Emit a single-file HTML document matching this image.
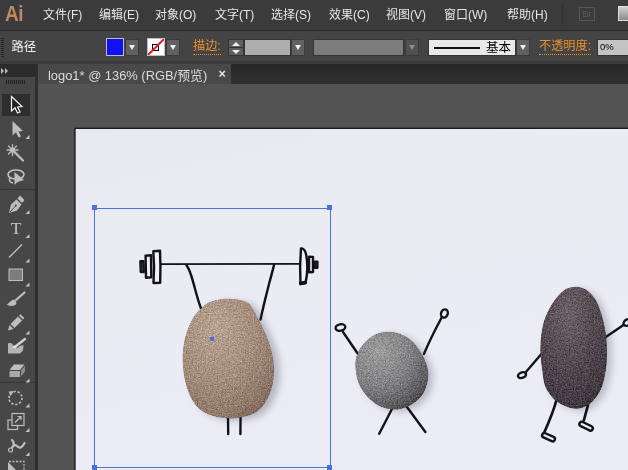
<!DOCTYPE html>
<html><head><meta charset="utf-8">
<style>
html,body{margin:0;padding:0;}
body{width:628px;height:470px;overflow:hidden;background:#535353;position:relative;font-family:"Liberation Sans","Noto Sans CJK SC",sans-serif;}
.abs,.abs *{position:absolute;}
body>*{will-change:transform;}
#menubar{left:0;top:0;width:628px;height:30px;background:#3b3b3b;}
#menubar span{top:6px;font-size:12px;color:#e6e6e6;white-space:nowrap;line-height:18px;}
#ctrl{left:0;top:30px;width:628px;height:31px;background:#444444;border-top:1px solid #2a2a2a;box-sizing:border-box;}
#ctrl .btn{top:8px;height:17px;width:14px;background:#606060;box-sizing:border-box;border:1px solid #3a3a3a;}
#ctrl .btn:after{content:"";position:absolute;left:2.5px;top:5px;border:3.5px solid transparent;border-top:5px solid #f0f0f0;border-bottom:none;}
#ctrl .dis:after{border-top-color:#8c8c8c;}
#ctrl .lbl{color:#e8912d;font-size:12.2px;line-height:15px;top:8px;white-space:nowrap;border-bottom:1px dotted #e8912d;}
#tabstrip{left:0;top:61px;width:628px;height:23px;background:linear-gradient(#272727,#303030);border-top:3px solid #3b3b3b;box-sizing:border-box;}
#tab{left:38px;top:64px;width:193px;height:20px;background:#494949;color:#dcdcdc;font-size:13px;line-height:21px;white-space:nowrap;}
#tools{left:0;top:64px;width:35px;height:406px;background:#474747;}
#toolsep{left:35px;top:64px;width:3px;height:406px;background:#2e2e2e;}
#canvas{left:38px;top:84px;width:590px;height:386px;background:#535353;}
#art{left:74px;top:127px;width:554px;height:343px;}
</style></head><body>
<div id="menubar" class="abs">
<span style="left:5px;top:2px;font-size:22px;font-weight:bold;color:#c08a62;line-height:24px;letter-spacing:-0.5px;transform:scaleX(0.86);transform-origin:0 0;">Ai</span>
<span style="left:43px">文件(F)</span>
<span style="left:99px">编辑(E)</span>
<span style="left:155px">对象(O)</span>
<span style="left:215px">文字(T)</span>
<span style="left:271px">选择(S)</span>
<span style="left:329px">效果(C)</span>
<span style="left:386px">视图(V)</span>
<span style="left:444px">窗口(W)</span>
<span style="left:507px">帮助(H)</span>
<div style="left:562px;top:4px;width:1px;height:22px;background:#303030;"></div>
<div style="left:579px;top:7px;width:16px;height:14px;border:1px solid #585858;box-sizing:border-box;color:#5a5a5a;font-size:9px;line-height:12px;text-align:center;"><span style="position:static;font-size:9px;color:#5c5c5c;line-height:12px;">Br</span></div>
<div style="left:618px;top:6px;width:14px;height:15px;border:1px solid #e0e0e0;box-sizing:border-box;background:linear-gradient(#d0d0d0,#8a8a8a);"></div>
</div>
<div id="ctrl" class="abs">
<div style="left:1px;top:7px;width:3px;height:20px;background:repeating-linear-gradient(#262626 0 1px,#444444 1px 2px);"></div>
<div style="left:11.500px;top:7px;color:#f0f0f0;font-size:12.300px;line-height:18px;white-space:nowrap;">路径</div>
<div style="left:106px;top:7px;width:18px;height:18px;box-sizing:border-box;border:1px solid #bebebe;background:#1010f5;"></div>
<div class="btn" style="left:125px;"></div>
<div style="left:146.500px;top:7px;width:18px;height:18px;box-sizing:border-box;border:1px solid #bebebe;background:#fff;overflow:hidden;">
 <div style="left:4.5px;top:4.5px;width:7px;height:7px;border:1px solid #000;box-sizing:border-box;"></div>
 <div style="left:-4px;top:7px;width:24px;height:2px;background:#e8192c;transform:rotate(-45deg);"></div>
</div>
<div class="btn" style="left:166px;"></div>
<div class="lbl" style="left:193px;">描边:</div>
<div style="left:228px;top:8px;width:16px;height:17px;background:#5e5e5e;border:1px solid #333;box-sizing:border-box;">
 <div style="left:0;top:7px;width:14px;height:1px;background:#333;"></div>
 <div style="left:3px;top:2px;border:4px solid transparent;border-bottom:4px solid #eee;border-top:none;"></div>
 <div style="left:3px;top:10px;border:4px solid transparent;border-top:4px solid #eee;border-bottom:none;"></div>
</div>
<div style="left:244px;top:8px;width:47px;height:17px;background:#adadad;border:1px solid #333;box-sizing:border-box;"></div>
<div class="btn" style="left:291px;"></div>
<div style="left:313px;top:8px;width:91px;height:17px;background:#7c7c7c;border:1px solid #333;box-sizing:border-box;"></div>
<div class="btn dis" style="left:405px;background:#505050;"></div>
<div style="left:428px;top:8px;width:88px;height:17px;background:#e9e9e9;border:1px solid #333;box-sizing:border-box;">
 <div style="left:5px;top:7px;width:46px;height:2px;background:#111;"></div>
 <div style="left:57px;top:-1px;font-size:12.5px;line-height:18px;color:#000;white-space:nowrap;">基本</div>
</div>
<div class="btn" style="left:516px;"></div>
<div class="lbl" style="left:539px;">不透明度:</div>
<div style="left:597px;top:8px;width:40px;height:17px;background:#c4c4c4;border:1px solid #333;box-sizing:border-box;">
 <div style="left:2px;top:0px;font-size:9.5px;line-height:13px;color:#000;">0%</div>
</div>
</div>
<div id="tabstrip" class="abs"></div>
<div id="tab" class="abs"><div style="left:10px;top:1px;font-size:12.9px;">logo1* @ 136% (RGB/预览)</div><div style="left:180.500px;top:0px;font-size:12.500px;font-weight:bold;color:#e4e4e4;">×</div></div>
<div id="canvas" class="abs"></div>
<div id="tools" class="abs">
 <div style="left:0;top:0;width:35px;height:13px;background:#2c2c2c;"></div>
 <div style="left:1px;top:3.5px;border:3.5px solid transparent;border-left:3.5px solid #bcbcbc;border-right:none;"></div>
 <div style="left:4.5px;top:3.5px;border:3.5px solid transparent;border-left:3.5px solid #bcbcbc;border-right:none;"></div>
 <div style="left:6px;top:16px;width:20px;height:4px;background:repeating-linear-gradient(90deg,#222 0 1px,#474747 1px 2px);"></div>
 <div style="left:2px;top:30px;width:28px;height:22px;background:#2e2e2e;"></div>
 <div style="left:0;top:125px;width:35px;height:1px;background:#363636;"></div>
 <div style="left:0;top:318px;width:35px;height:1px;background:#363636;"></div>
</div>
<svg class="abs" style="left:0;top:64px;" width="35" height="406" viewBox="0 64 35 406">
<g fill="#c4c4c4">
 <!-- small corner triangles -->
 <path d="M29.500 135v4h-4zM29.500 210v4h-4zM29.500 234v4h-4zM29.500 258.500v4h-4zM29.500 282.500v4h-4zM29.500 330.500v4h-4zM29.500 378.500v4h-4zM29.500 403.500v4h-4zM29.500 428v4h-4zM29.500 452v4h-4z"/>
</g>
<!-- selection tool -->
<path d="M11.500 96.500 L11.500 111 L15 107.800 L17.500 113 L20 112 L17.600 107 L22 106.500 Z" fill="#222" stroke="#f0f0f0" stroke-width="1.200" stroke-linejoin="miter"/>
<!-- direct selection -->
<path d="M12.500 121 L12.500 135.500 L16 132.300 L18.500 137.500 L21 136.500 L18.600 131.500 L23 131 Z" fill="#bdbdbd"/>
<!-- magic wand -->
<g stroke="#bebebe" stroke-width="1.300" fill="none" stroke-linecap="round">
 <path d="M12.500 144.500v11M7 150h11M8.500 146l8 8M16.500 146l-8 8"/><circle cx="12.500" cy="150" r="2.600" fill="#bebebe" stroke="none"/>
 <path d="M14 151.500L23 160.500" stroke-width="2.200"/>
</g>
<!-- lasso -->
<g stroke="#bebebe" stroke-width="1.600" fill="none">
 <ellipse cx="16" cy="174.500" rx="8" ry="4.500"/>
 <path d="M10 178c-1.500 2 0 4.500 3 5"/>
</g>
<path d="M14.500 172 L14.500 185 L17.500 182 L24 180 Z" fill="#bebebe"/>
<!-- pen -->
<g fill="#bebebe">
 <path d="M9 213 L11 204.500 L16.500 199.500 L21.500 204.500 L17 210.500 Z"/>
 <path d="M17.500 198.500 L20 195.500 L24.500 200 L22 203 Z"/>
</g>
<path d="M10 212 L15.500 206" stroke="#474747" stroke-width="1"/>
<circle cx="15.800" cy="205.500" r="1.100" fill="#474747"/>
<!-- T -->
<text x="16" y="233.500" text-anchor="middle" font-family="Liberation Serif,serif" font-size="17.500" fill="#c4c4c4">T</text>
<!-- line -->
<path d="M9 257.500L22 244.500" stroke="#bebebe" stroke-width="1.500"/>
<!-- rect -->
<rect x="9" y="269" width="13.500" height="11.500" fill="#7d7d7d" stroke="#c0c0c0" stroke-width="1"/>
<!-- brush -->
<path d="M24.500 292.500 L16 300" stroke="#bebebe" stroke-width="2.200" stroke-linecap="round"/>
<path d="M6.500 304.500 C9 303.500 10.500 300.500 13.500 299.500 C15.500 300 16.500 302 16.500 304 C14 306.500 9.500 306.500 6.500 304.500Z" fill="#bebebe"/>
<!-- pencil -->
<g fill="#bebebe">
 <path d="M8 330.500 L9.500 325 L13.500 329 Z"/>
 <path d="M10.500 324 L18 316.500 L22 320.500 L14.500 328 Z"/>
 <path d="M19 315.500 L20.500 314.200 L24.300 318 L23 319.500 Z"/>
</g>
<!-- blob brush -->
<g>
 <path d="M8 343.500 C10 342.500 12 343 13 345 C14 348.500 18 349 19.500 346 L23.500 345 L23 350.500 L20 353.500 L8 353.500 Z" fill="#b4b4b4"/>
 <path d="M15.500 346.500 L25 339" stroke="#d0d0d0" stroke-width="2.400" stroke-linecap="round"/>
 <path d="M12.500 347.500 C13.500 345 15.500 344.500 17 346 C16.500 348.500 14.500 349 12.500 347.500Z" fill="#e0e0e0"/>
</g>
<!-- eraser -->
<g fill="#bebebe">
 <path d="M14 364.500 L24.500 364.500 L20 370 L9.500 370 Z"/>
 <path d="M9.500 371 L20 371 L20 377 L9.500 377 Z" fill="#a8a8a8"/>
 <path d="M21 370.500 L25 365.500 L25 371.500 L21 376.500 Z" fill="#8d8d8d"/>
</g>
<!-- rotate -->
<circle cx="15.500" cy="398" r="6.500" fill="none" stroke="#bebebe" stroke-width="1.600" stroke-dasharray="2.200 1.800"/>
<path d="M8.500 391.500 L14 391 L10.500 396 Z" fill="#bebebe"/>
<!-- scale -->
<g fill="none" stroke="#bebebe" stroke-width="1.200">
 <rect x="8" y="420" width="9.500" height="9.500"/>
 <rect x="12" y="413.500" width="12" height="12" fill="#474747"/>
 <path d="M15 422.500 L21 416.500 M17.500 416.500 H21 V420"/>
</g>
<!-- warp -->
<g fill="none" stroke="#bebebe" stroke-width="2.200" stroke-linecap="round">
 <path d="M10.500 450 C13 445 15 444 17.500 446.500 C20 449 22.500 447 24.500 443"/>
 <path d="M12 440 C13.500 441.500 14 443.500 13.500 445"/>
</g>
<circle cx="10.500" cy="450" r="2" fill="#474747" stroke="#bebebe" stroke-width="1.200"/>
<!-- free transform -->
<path d="M8 462 L16 470 L8 470 Z" fill="#bebebe"/>
<path d="M9 461.500 H24 V470" fill="none" stroke="#bebebe" stroke-width="1.300" stroke-dasharray="2 1.500"/>
</svg>
<div id="toolsep" class="abs"></div>
<svg id="art" class="abs" width="554" height="343" viewBox="74 127 554 343">
<defs>
<linearGradient id="bg" x1="0" y1="0" x2="0.35" y2="1">
 <stop offset="0" stop-color="#e8e9ef"/><stop offset="0.35" stop-color="#ebebf4"/><stop offset="1" stop-color="#ececf6"/>
</linearGradient>
<radialGradient id="g1" cx="0.36" cy="0.26" r="0.82">
 <stop offset="0" stop-color="#b8a290"/><stop offset="0.5" stop-color="#a68e7c"/><stop offset="0.85" stop-color="#917a6a"/><stop offset="1" stop-color="#82695c"/>
</radialGradient>
<radialGradient id="g2" cx="0.32" cy="0.26" r="0.86">
 <stop offset="0" stop-color="#9c9c9d"/><stop offset="0.5" stop-color="#828284"/><stop offset="0.82" stop-color="#5f5d60"/><stop offset="1" stop-color="#454043"/>
</radialGradient>
<radialGradient id="g3" cx="0.42" cy="0.22" r="0.85">
 <stop offset="0" stop-color="#6c6068"/><stop offset="0.5" stop-color="#554950"/><stop offset="0.85" stop-color="#443a42"/><stop offset="1" stop-color="#382f36"/>
</radialGradient>
<filter id="blur4" x="-30%" y="-30%" width="160%" height="160%"><feGaussianBlur stdDeviation="3.5"/></filter>
<filter id="grain" x="0" y="0" width="100%" height="100%" color-interpolation-filters="sRGB">
 <feTurbulence type="fractalNoise" baseFrequency="0.75" numOctaves="2" seed="3" result="n"/>
 <feColorMatrix in="n" type="matrix" values="0.7 0.7 0 0 -0.2  0.7 0.7 0 0 -0.2  0.7 0.7 0 0 -0.2  0 0 0 0 1" result="gn"/>
 <feComposite in="SourceGraphic" in2="gn" operator="arithmetic" k1="0" k2="1" k3="0.44" k4="-0.22" result="mix"/>
 <feComposite in="mix" in2="SourceGraphic" operator="in"/>
</filter>
<path id="p1" d="M230.7 298.9 C236.0 299.2 242.7 299.9 246.7 302.1 C250.7 304.4 251.5 307.0 254.7 312.4 C257.9 317.8 262.9 327.8 265.8 334.7 C268.7 341.6 270.9 348.0 272.2 353.9 C273.5 359.8 273.8 364.6 273.8 369.9 C273.8 375.2 273.5 380.5 272.2 385.8 C270.9 391.1 268.4 397.4 265.8 401.8 C263.2 406.2 260.0 409.5 256.3 412.0 C252.6 414.5 247.8 415.7 243.5 416.8 C239.2 417.9 235.5 418.5 230.7 418.4 C225.9 418.3 219.5 417.5 214.7 416.2 C209.9 414.9 205.6 413.5 201.9 410.8 C198.2 408.1 195.1 404.6 192.4 400.2 C189.8 395.8 187.6 390.3 186.0 384.2 C184.4 378.1 183.1 370.7 182.8 363.5 C182.5 356.3 182.9 348.3 184.4 341.1 C185.9 333.9 188.5 326.2 191.7 320.4 C194.9 314.5 199.7 309.3 203.5 306.0 C207.3 302.7 210.2 301.7 214.7 300.5 C219.2 299.3 225.4 298.6 230.7 298.9Z"/>
<path id="p2" d="M385.5 331.7 C389.1 331.6 393.9 331.8 398.2 333.2 C402.4 334.6 407.3 337.1 411.0 340.2 C414.7 343.3 417.9 347.6 420.6 351.9 C423.3 356.2 425.8 361.4 427.0 365.8 C428.2 370.2 428.6 374.2 428.1 378.6 C427.6 383.0 425.9 388.5 423.8 392.4 C421.7 396.3 418.5 399.4 415.3 402.0 C412.1 404.6 408.3 406.6 404.6 407.8 C400.9 409.1 397.0 409.8 392.9 409.5 C388.8 409.2 384.2 408.3 380.1 406.3 C376.0 404.3 371.8 401.1 368.4 397.7 C365.0 394.3 361.9 390.1 359.9 386.0 C357.8 381.9 356.8 377.4 356.1 373.2 C355.4 368.9 355.0 364.6 355.6 360.5 C356.2 356.4 357.8 352.4 359.9 348.8 C362.0 345.2 365.6 341.7 368.4 339.2 C371.2 336.7 374.0 335.1 376.9 333.8 C379.8 332.6 381.9 331.8 385.5 331.7Z"/>
<path id="p3" d="M575.5 286.7 C579.1 286.7 582.9 287.6 586.3 289.8 C589.6 292.0 593.0 295.5 595.6 299.7 C598.2 303.9 600.1 309.5 601.8 315.1 C603.5 320.8 604.9 327.4 605.8 333.6 C606.7 339.8 607.0 345.9 607.0 352.1 C607.0 358.3 606.8 364.5 605.8 370.6 C604.8 376.7 603.4 383.5 601.2 388.6 C599.0 393.7 596.0 398.0 592.8 401.2 C589.5 404.4 585.4 406.8 581.7 407.9 C578.0 409.0 574.5 408.8 570.5 407.9 C566.5 407.0 561.2 404.6 557.8 402.3 C554.3 400.0 552.0 397.2 549.8 394.3 C547.6 391.4 545.9 388.8 544.6 384.8 C543.4 380.9 543.0 376.1 542.3 370.6 C541.6 365.2 540.5 358.3 540.4 352.1 C540.2 345.9 540.5 339.5 541.4 333.6 C542.2 327.7 543.4 322.1 545.5 316.7 C547.6 311.3 550.7 305.7 553.9 301.2 C557.1 296.7 561.1 292.2 564.7 289.8 C568.3 287.4 571.9 286.7 575.5 286.7Z"/>
</defs>
<rect x="75" y="128.3" width="560" height="350" fill="url(#bg)" stroke="#0c0c0c" stroke-width="1.2"/>
<!-- shadows -->
<use href="#p1" fill="#a9a9b7" opacity="0.8" filter="url(#blur4)" transform="translate(6,2.5)"/>
<use href="#p2" fill="#a9a9b7" opacity="0.75" filter="url(#blur4)" transform="translate(5,2.5)"/>
<use href="#p3" fill="#a9a9b7" opacity="0.7" filter="url(#blur4)" transform="translate(5,2.5)"/>
<!-- doodles -->
<g stroke="#121218" stroke-width="2.4" fill="none" stroke-linecap="round" stroke-linejoin="round">
 <path d="M161 264.200 L300.500 263.800" stroke-width="1.700"/>
 <path d="M186.300 264.800 C188.500 268 190 271.500 191 275 C193 281 194.500 287 196 292.500 C197.500 298 199 303 201 308.500"/>
 <path d="M274.200 264.300 C272.500 271 271 277 269.400 282.500 C267.800 289 266 296 264.600 301.600 C263.300 307 262 313 260.500 319.500"/>
 <path d="M228 414 L228.200 434 M240.600 414 L240.400 434"/>
 <path d="M153.300 251.200 L160 250.800 C160.600 262 160.600 272 160.200 282.800 L153.500 283 C154.300 272 154.300 262 153.300 251.200 Z" fill="#f2f2f8"/>
 <path d="M145.600 255.600 L151 255.300 L151.300 277.300 L146 277.800 Z" fill="#eeeef6"/>
 <path d="M140.400 261.200 L143.500 261.200 L143.800 272 L140.800 272 Z" fill="#55555c"/>
 <path d="M301 248.400 C303.500 248 305 250 306 254 C307.700 262 307.500 274 305.500 283 L300.500 284.200 C299.800 272 300 260 301 248.400 Z" fill="#f2f2f8"/>
 <path d="M300.500 283.300 L305.500 282.500" stroke-width="3.400"/>
 <path d="M309 256.600 L313 257 L313 272 L309 272.300 Z" fill="#eeeef6"/>
 <path d="M314.800 261.600 L317.400 261.800 L317.400 267.700 L314.800 267.900 Z" fill="#8888a0"/>
 <!-- stone 2 limbs -->
 <path d="M343 332 L358 354"/>
 <ellipse cx="340.400" cy="327.500" rx="4.900" ry="3.200" transform="rotate(-10 340.400 327.500)"/>
 <path d="M441.400 318 C435 330 429 342 423.900 354"/>
 <ellipse cx="444.400" cy="313.500" rx="3.300" ry="4.200" transform="rotate(22 444.400 313.500)"/>
 <path d="M393.500 406 L379.200 433.700"/>
 <path d="M405.500 405 L425.400 432"/>
 <!-- stone 3 limbs -->
 <path d="M543.500 351.500 L525.500 372.500"/>
 <ellipse cx="522" cy="375.200" rx="4.200" ry="2.700" transform="rotate(-20 522 375.200)"/>
 <path d="M604 338.300 L623.500 325"/>
 <ellipse cx="627.500" cy="322.500" rx="4.200" ry="3" transform="rotate(-30 627.500 322.500)"/>
 <path d="M556.500 400 C553.500 411 548.500 423 544.200 432.500" stroke-width="2.700"/>
 <rect x="541.700" y="434.900" width="13.600" height="4.600" rx="2.300" transform="rotate(24 548.500 437.200)"/>
 <path d="M588 405 L583.800 420.500" stroke-width="2.700"/>
 <rect x="578.900" y="423.900" width="14.400" height="4.600" rx="2.300" transform="rotate(26 586.100 426.200)"/>
</g>
<!-- stones -->
<use href="#p1" fill="url(#g1)" filter="url(#grain)"/>
<use href="#p2" fill="url(#g2)" filter="url(#grain)"/>
<use href="#p3" fill="url(#g3)" filter="url(#grain)"/>
<!-- selection -->
<g fill="#4872dc" stroke="none" shape-rendering="crispEdges">
 <rect x="94" y="208" width="237" height="1"/>
 <rect x="94" y="208" width="1" height="262"/>
 <rect x="330" y="208" width="1" height="262"/>
 <rect x="94" y="467" width="237" height="1"/>
 <rect x="92" y="205" width="5" height="5"/>
 <rect x="327" y="205" width="5" height="5"/>
 <rect x="92" y="465" width="5" height="5"/>
 <rect x="327" y="465" width="5" height="5"/>
 <rect x="210" y="337" width="4" height="4"/>
</g>
</svg>
</body></html>
